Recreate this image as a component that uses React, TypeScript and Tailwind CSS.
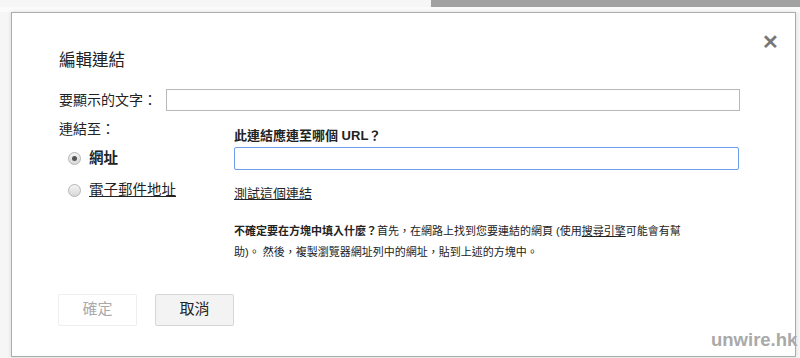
import React from 'react';

const font = { fontFamily: '"Liberation Sans", "Noto Sans CJK TC", sans-serif' };

function Radio({ checked }: { checked?: boolean }) {
  return (
    <span className="flex h-[13px] w-[13px] items-center justify-center rounded-full border border-[#b5b5b5] bg-gradient-to-b from-[#f4f4f4] to-[#d8d8d8]">
      {checked && <span className="h-[5px] w-[5px] rounded-full bg-[#555]" />}
    </span>
  );
}

export default function App() {
  return (
    <div className="relative h-[358px] w-[800px] overflow-hidden bg-[#f6f6f6] text-[#222]" style={font}>
      {/* top strip */}
      <div className="flex h-[7px]">
        <div className="w-[431px]" />
        <div className="flex-1 bg-[#a2a2a2]" />
      </div>
      <div className="h-[5px] bg-[#fbfbfb]" />

      {/* dialog */}
      <div className="relative ml-[11px] h-[345px] w-[785px] border border-[#acacac] bg-white shadow-[0_0_4px_rgba(0,0,0,0.12)]">
        <button className="absolute left-[750px] top-[19px] text-[20px] font-bold leading-none text-[#777]">✕</button>

        <div className="pl-[47px] pt-[37px]">
          <h1 className="text-[16.5px] leading-[20px]">編輯連結</h1>

          <div className="mt-[19px] flex items-center">
            <label className="w-[107px] text-[14px] leading-[18px]">要顯示的文字：</label>
            <input className="h-[22px] w-[574px] border border-[#b9b9b9] bg-white outline-none" />
          </div>

          <div className="mt-[9px] flex">
            <div className="w-[175px]">
              <div className="text-[14px] leading-[18px]">連結至：</div>
              <div className="mt-[11px] flex items-center gap-[8px] pl-[9px]">
                <Radio checked />
                <span className="text-[14.5px] font-bold leading-[18px]">網址</span>
              </div>
              <div className="mt-[14px] flex items-center gap-[8px] pl-[9px]">
                <Radio />
                <span className="text-[14.5px] leading-[18px] underline">電子郵件地址</span>
              </div>
            </div>

            <div className="pt-[7px]">
              <div className="text-[13px] font-bold leading-[18px]">此連結應連至哪個 URL？</div>
              <input className="mt-[2px] h-[23px] w-[505px] rounded-[2px] border border-[#6d9eeb] bg-white outline-none" />
              <div className="mt-[14px] text-[13px] leading-[18px] underline">測試這個連結</div>
              <p className="mt-[18px] w-[500px] text-[11px] leading-[21px]">
                <b>不確定要在方塊中填入什麼？</b>首先，在網路上找到您要連結的網頁 (使用<span className="underline">搜尋引擎</span>可能會有幫
                <br />
                助)。 然後，複製瀏覽器網址列中的網址，貼到上述的方塊中。
              </p>
            </div>
          </div>

          <div className="mt-[31px] flex gap-[18px]">
            <button className="-ml-px h-[32px] w-[79px] rounded-[2px] border border-[#eeeeee] bg-white text-[15px] text-[#aaa]">確定</button>
            <button className="h-[32px] w-[79px] rounded-[2px] border border-[#d6d6d6] bg-[#f3f3f3] text-[15px] text-[#222]">取消</button>
          </div>
        </div>
      </div>

      <div className="absolute left-[711px] top-[328px] text-[18.5px] font-bold leading-[24px] text-[#a9a9a9]">unwire.hk</div>
    </div>
  );
}
